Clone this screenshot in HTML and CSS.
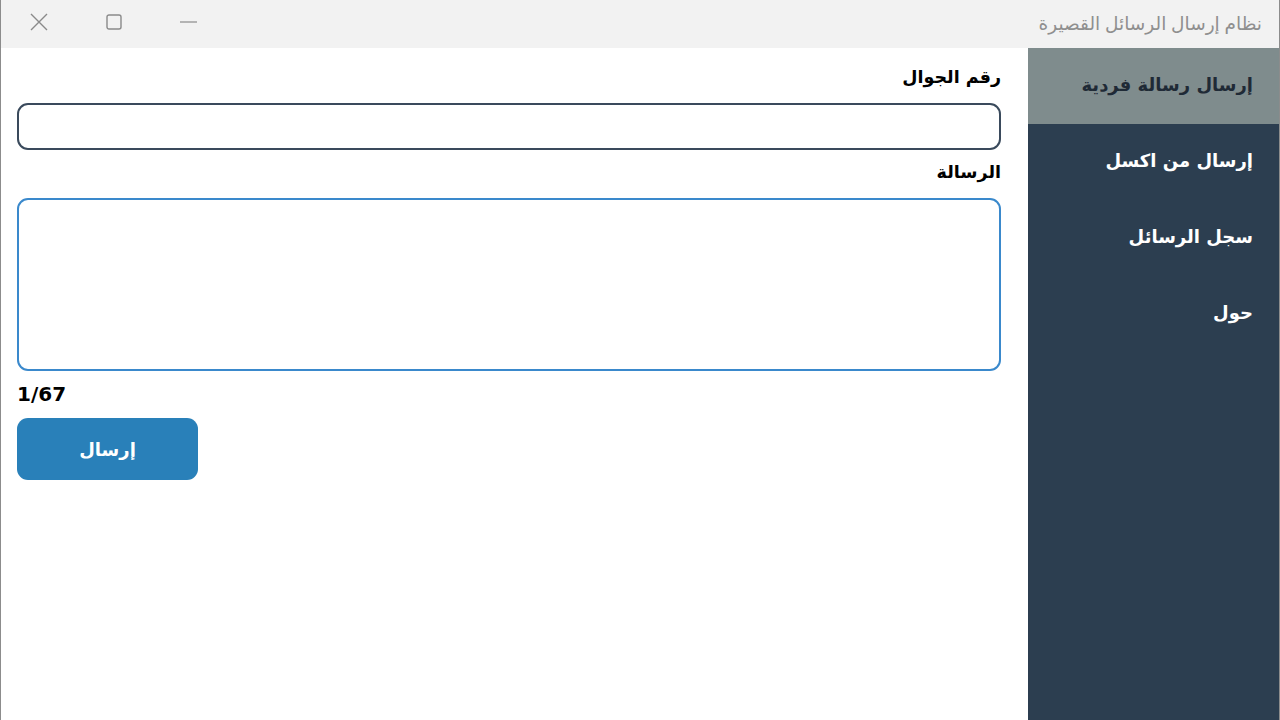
FILE: index.html
```html
<!DOCTYPE html>
<html lang="ar">
<head>
<meta charset="utf-8">
<title>نظام إرسال الرسائل القصيرة</title>
<link rel="stylesheet" href="styles.css">
</head>
<body>
<div class="window">
  <header class="titlebar">
    <div class="title">نظام إرسال الرسائل القصيرة</div>
    <div class="controls">
      <span class="ctl">
        <svg width="17" height="2" viewBox="0 0 17 2"><line x1="0" y1="1" x2="17" y2="1" stroke="#8a8a8a" stroke-width="1.2"/></svg>
      </span>
      <span class="ctl">
        <svg width="16" height="16" viewBox="0 0 16 16"><rect x="1" y="1" width="14" height="14" rx="2" fill="none" stroke="#8a8a8a" stroke-width="1.4"/></svg>
      </span>
      <span class="ctl">
        <svg width="18" height="18" viewBox="0 0 18 18"><path d="M1 1 L17 17 M17 1 L1 17" stroke="#8a8a8a" stroke-width="1.4" fill="none"/></svg>
      </span>
    </div>
  </header>
  <div class="body">
    <nav class="sidebar">
      <div class="nav-item active">إرسال رسالة فردية</div>
      <div class="nav-item">إرسال من اكسل</div>
      <div class="nav-item">سجل الرسائل</div>
      <div class="nav-item">حول</div>
    </nav>
    <main class="main">
      <label class="label label-first">رقم الجوال</label>
      <div class="input"></div>
      <label class="label">الرسالة</label>
      <div class="textarea"></div>
      <div class="counter" dir="ltr">1/67</div>
      <button class="send">إرسال</button>
    </main>
  </div>
</div>
</body>
</html>
```
FILE: styles.css
```css
* { box-sizing: border-box; margin: 0; padding: 0; }
html, body { width: 1280px; height: 720px; overflow: hidden; background: #fff; }
body { font-family: "DejaVu Sans", "Noto Sans", sans-serif; direction: rtl; }

.window {
  width: 1280px;
  height: 720px;
  display: flex;
  flex-direction: column;
  border-left: 1px solid #8c8c8c;
  border-right: 1px solid #8c8c8c;
}

.titlebar {
  height: 48px;
  background: #f2f2f2;
  display: flex;
  align-items: center;
  justify-content: space-between;
  flex-shrink: 0;
}
.title {
  padding-right: 17px;
  margin-top: -3px;
  font-family: "Noto Sans", "DejaVu Sans", sans-serif;
  font-size: 18.5px;
  color: #8f8f8f;
}
.controls {
  display: flex;
  direction: rtl;
  height: 100%;
  margin-top: -5px;
}
.ctl {
  width: 75px;
  height: 100%;
  display: flex;
  align-items: center;
  justify-content: center;
}

.body {
  flex: 1;
  display: flex;
  min-height: 0;
}

.sidebar {
  width: 251px;
  background: #2c3e50;
  display: flex;
  flex-direction: column;
  flex-shrink: 0;
}
.nav-item {
  height: 76px;
  display: flex;
  align-items: center;
  padding-right: 26px;
  padding-bottom: 4px;
  color: #fff;
  font-weight: bold;
  font-size: 18px;
}
.nav-item.active {
  background: #7f8c8d;
  color: #1f2a36;
}

.main {
  flex: 1;
  display: flex;
  flex-direction: column;
  padding: 17px 27px 0 16px;
}
.label {
  font-weight: bold;
  font-size: 17.5px;
  line-height: 24px;
  color: #000;
  margin-top: 10px;
  margin-bottom: 14px;
}
.label-first { margin-top: 0; }

.input {
  height: 47px;
  border: 2px solid #3a4a5c;
  border-radius: 11px;
  background: #fff;
}
.textarea {
  height: 173px;
  border: 2px solid #3a89cc;
  border-radius: 11px;
  background: #fff;
}
.counter {
  align-self: flex-end;
  font-family: "DejaVu Sans", sans-serif;
  font-weight: bold;
  font-size: 20px;
  line-height: 24px;
  margin-top: 11px;
  color: #000;
}
.send {
  align-self: flex-end;
  margin-top: 12px;
  width: 181px;
  height: 62px;
  background: #2980b9;
  border: none;
  border-radius: 11px;
  color: #fff;
  font-family: "DejaVu Sans", sans-serif;
  font-weight: bold;
  font-size: 18px;
}
```
